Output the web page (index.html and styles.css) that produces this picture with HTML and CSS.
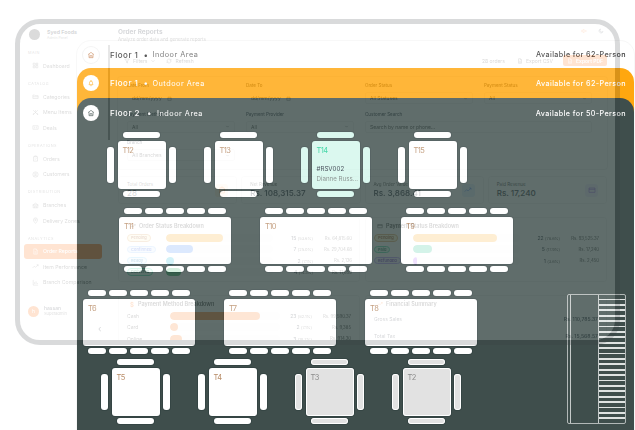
FILE: index.html
```html
<!DOCTYPE html>
<html lang="en">
<head>
<meta charset="utf-8">
<title>Floors</title>
<link rel="stylesheet" href="styles.css">
</head>
<body>
<svg class="sprite" width="0" height="0" aria-hidden="true">
  <symbol id="i-home" viewBox="0 0 24 24"><path d="M3 11 12 4l9 7M6 9.500V20h12V9.500M9 20v-6h6v6"/></symbol>
  <symbol id="i-bell" viewBox="0 0 24 24"><path d="M6 17c1.500-2 1.500-4 1.500-6a4.500 4.500 0 0 1 9 0c0 2 0 4 1.500 6zM10 20h4M12 3v3"/></symbol>
  <symbol id="i-grid" viewBox="0 0 24 24"><path d="M4 4h7v7H4zM14 4h6v5h-6zM14 12h6v8h-6zM4 14h7v6H4z"/></symbol>
  <symbol id="i-folder" viewBox="0 0 24 24"><path d="M3 7h6l2 2h10v10H3zM3 13h18"/></symbol>
  <symbol id="i-cross" viewBox="0 0 24 24"><path d="M4 4l16 16M20 4 4 20M12 4v5M6 14l-2 6M18 14l2 6"/></symbol>
  <symbol id="i-ticket" viewBox="0 0 24 24"><path d="M3 6h18v12H3zM9 9v6M15 9v6"/></symbol>
  <symbol id="i-bag" viewBox="0 0 24 24"><path d="M5 6h14v15H5zM9 6V3h6v3M9 13l2 2 4-4"/></symbol>
  <symbol id="i-user" viewBox="0 0 24 24"><circle cx="12" cy="12" r="9"/><circle cx="12" cy="10" r="3"/><path d="M6 18c2-3 10-3 12 0"/></symbol>
  <symbol id="i-branch" viewBox="0 0 24 24"><path d="M4 10 12 4l8 6v10H4zM9 20v-6h6v6M2 10h20"/></symbol>
  <symbol id="i-pin" viewBox="0 0 24 24"><path d="M12 22s7-7 7-12a7 7 0 0 0-14 0c0 5 7 12 7 12z"/><circle cx="12" cy="10" r="2.500"/></symbol>
  <symbol id="i-file" viewBox="0 0 24 24"><path d="M6 3h8l4 4v14H6zM14 3v4h4M9 13h6M9 17h6"/></symbol>
  <symbol id="i-trend" viewBox="0 0 24 24"><path d="M2 17l6-6 4 4 9-9M16 6h5v5"/></symbol>
  <symbol id="i-chart" viewBox="0 0 24 24"><path d="M4 3v18h17M9 17v-6M14 17V8M19 17v-3"/></symbol>
  <symbol id="i-funnel" viewBox="0 0 24 24"><path d="M3 4h18l-7 8v8l-4-2v-6z"/></symbol>
  <symbol id="i-refresh" viewBox="0 0 24 24"><path d="M4 12a8 8 0 0 1 14-5l2 2M20 4v5h-5M20 12a8 8 0 0 1-14 5l-2-2M4 20v-5h5"/></symbol>
  <symbol id="i-cal" viewBox="0 0 24 24"><path d="M4 6h16v15H4zM4 10h16M8 3v4M16 3v4"/></symbol>
  <symbol id="i-card" viewBox="0 0 24 24"><path d="M3 6h18v13H3zM3 10h18"/></symbol>
  <symbol id="i-sound" viewBox="0 0 24 24"><path d="M3 9h4l5-4v14l-5-4H3zM16 9l5 6M21 9l-5 6"/></symbol>
  <symbol id="i-moon" viewBox="0 0 24 24"><path d="M20 14A8 8 0 1 1 10 4a7 7 0 0 0 10 10z"/></symbol>
  <symbol id="i-chev" viewBox="0 0 24 24"><path d="M6 9l6 6 6-6"/></symbol>
</svg>

<main class="stage">
  <section class="floor floor-plain">
    <header class="floor-head">
      <span class="floor-badge badge-plain"><svg class="ico"><use href="#i-home"/></svg></span>
      <span class="floor-name">Floor 1</span><span class="floor-dot">•</span><span class="floor-area">Indoor Area</span>
      <span class="floor-avail">Available for 62-Person</span>
    </header>
    <section class="floor floor-orange">
      <header class="floor-head">
        <span class="floor-badge badge-orange"><svg class="ico"><use href="#i-bell"/></svg></span>
        <span class="floor-name">Floor 1</span><span class="floor-dot">•</span><span class="floor-area">Outdoor Area</span>
        <span class="floor-avail">Available for 62-Person</span>
      </header>
      <section class="floor floor-dark">
        <header class="floor-head">
          <span class="floor-badge badge-dark"><svg class="ico"><use href="#i-home"/></svg></span>
          <span class="floor-name">Floor 2</span><span class="floor-dot dot-wide">•</span><span class="floor-area">Indoor Area</span>
          <span class="floor-avail">Available for 50-Person</span>
        </header>
        <div class="plan">
          <div class="row row-a">
            <div class="sq"><i class="ch ch-t"></i><i class="ch ch-l"></i><div class="top"><b>T12</b></div><i class="ch ch-r"></i><i class="ch ch-b"></i></div>
            <div class="sq"><i class="ch ch-t"></i><i class="ch ch-l"></i><div class="top"><b>T13</b></div><i class="ch ch-r"></i><i class="ch ch-b"></i></div>
            <div class="sq sq-res"><i class="ch ch-t"></i><i class="ch ch-l"></i><div class="top"><b>T14</b><span class="res-id">#RSV002</span><span class="res-name">Dianne Russ...</span></div><i class="ch ch-r"></i><i class="ch ch-b"></i></div>
            <div class="sq"><i class="ch ch-t"></i><i class="ch ch-l"></i><div class="top"><b>T15</b></div><i class="ch ch-r"></i><i class="ch ch-b"></i></div>
          </div>
          <div class="row row-b">
            <div class="wide"><div class="chs"><i></i><i></i><i></i><i></i><i></i></div><div class="top"><b>T11</b></div><div class="chs"><i></i><i></i><i></i><i></i><i></i></div></div>
            <div class="wide"><div class="chs"><i></i><i></i><i></i><i></i><i></i></div><div class="top"><b>T10</b></div><div class="chs"><i></i><i></i><i></i><i></i><i></i></div></div>
            <div class="wide"><div class="chs"><i></i><i></i><i></i><i></i><i></i></div><div class="top"><b>T9</b></div><div class="chs"><i></i><i></i><i></i><i></i><i></i></div></div>
          </div>
          <div class="row row-c">
            <div class="wide"><div class="chs"><i></i><i></i><i></i><i></i><i></i></div><div class="top"><b>T6</b></div><div class="chs"><i></i><i></i><i></i><i></i><i></i></div></div>
            <div class="wide"><div class="chs"><i></i><i></i><i></i><i></i><i></i></div><div class="top"><b>T7</b></div><div class="chs"><i></i><i></i><i></i><i></i><i></i></div></div>
            <div class="wide"><div class="chs"><i></i><i></i><i></i><i></i><i></i></div><div class="top"><b>T8</b></div><div class="chs"><i></i><i></i><i></i><i></i><i></i></div></div>
          </div>
          <div class="row row-d">
            <div class="sq"><i class="ch ch-t"></i><i class="ch ch-l"></i><div class="top"><b>T5</b></div><i class="ch ch-r"></i><i class="ch ch-b"></i></div>
            <div class="sq"><i class="ch ch-t"></i><i class="ch ch-l"></i><div class="top"><b>T4</b></div><i class="ch ch-r"></i><i class="ch ch-b"></i></div>
            <div class="sq sq-off"><i class="ch ch-t"></i><i class="ch ch-l"></i><div class="top"><b>T3</b></div><i class="ch ch-r"></i><i class="ch ch-b"></i></div>
            <div class="sq sq-off"><i class="ch ch-t"></i><i class="ch ch-l"></i><div class="top"><b>T2</b></div><i class="ch ch-r"></i><i class="ch ch-b"></i></div>
          </div>
          <div class="stairs"><div class="landing"></div><div class="rungs"></div></div>
        </div>
      </section>
    </section>
  </section>

  <div class="device">
    <div class="screen">
      <aside class="side">
        <div class="brand">
          <span class="brand-logo"></span>
          <div><div class="brand-name">Syed Foods</div><div class="brand-sub">Admin Panel</div></div>
        </div>
        <div class="nav-label">MAIN</div>
        <a class="nav"><svg class="ico"><use href="#i-grid"/></svg>Dashboard</a>
        <div class="nav-label">CATALOG</div>
        <a class="nav"><svg class="ico"><use href="#i-folder"/></svg>Categories</a>
        <a class="nav"><svg class="ico"><use href="#i-cross"/></svg>Menu Items</a>
        <a class="nav"><svg class="ico"><use href="#i-ticket"/></svg>Deals</a>
        <div class="nav-label">OPERATIONS</div>
        <a class="nav"><svg class="ico"><use href="#i-bag"/></svg>Orders</a>
        <a class="nav"><svg class="ico"><use href="#i-user"/></svg>Customers</a>
        <div class="nav-label">DISTRIBUTION</div>
        <a class="nav"><svg class="ico"><use href="#i-branch"/></svg>Branches</a>
        <a class="nav"><svg class="ico"><use href="#i-pin"/></svg>Delivery Zones</a>
        <div class="nav-label">ANALYTICS</div>
        <a class="nav nav-on"><svg class="ico"><use href="#i-file"/></svg>Order Reports</a>
        <a class="nav"><svg class="ico"><use href="#i-trend"/></svg>Item Performance</a>
        <a class="nav"><svg class="ico"><use href="#i-chart"/></svg>Branch Comparison</a>
        <div class="who">
          <span class="who-av">h</span>
          <div><div class="who-name">hassan</div><div class="who-role">Superadmin</div></div>
          <span class="who-chev">‹</span>
        </div>
      </aside>
      <div class="main">
        <header class="m-head">
          <div><h1>Order Reports</h1><p>Analyze order data and generate reports</p></div>
          <div class="m-tools"><svg class="ico ico-o"><use href="#i-sound"/></svg><svg class="ico"><use href="#i-moon"/></svg></div>
        </header>
        <div class="bar">
          <span class="bar-item"><svg class="ico"><use href="#i-funnel"/></svg>Filters<svg class="ico"><use href="#i-chev"/></svg></span>
          <span class="bar-item"><svg class="ico"><use href="#i-refresh"/></svg>Refresh</span>
          <span class="bar-count">28 orders</span>
          <span class="bar-item"><svg class="ico"><use href="#i-file"/></svg>Export CSV</span>
          <span class="btn"><svg class="ico"><use href="#i-file"/></svg>Export PDF</span>
        </div>
        <div class="filters">
          <label class="f"><span>Date From</span><div class="inp">dd/mm/yyyy<svg class="ico"><use href="#i-cal"/></svg></div></label>
          <label class="f"><span>Date To</span><div class="inp">dd/mm/yyyy<svg class="ico"><use href="#i-cal"/></svg></div></label>
          <label class="f"><span>Order Status</span><div class="inp inp-full">All Statuses<svg class="ico"><use href="#i-chev"/></svg></div></label>
          <label class="f"><span>Payment Status</span><div class="inp inp-full">All<svg class="ico"><use href="#i-chev"/></svg></div></label>
          <label class="f"><span>Payment Method</span><div class="inp inp-full">All<svg class="ico"><use href="#i-chev"/></svg></div></label>
          <label class="f"><span>Payment Provider</span><div class="inp inp-full">All<svg class="ico"><use href="#i-chev"/></svg></div></label>
          <label class="f f-2"><span>Customer Search</span><div class="inp">Search by name or phone...</div></label>
          <label class="f"><span>Branch</span><div class="inp inp-full">All Branches<svg class="ico"><use href="#i-chev"/></svg></div></label>
        </div>
        <div class="stats">
          <div class="stat"><div><small>Total Orders</small><strong class="st-grey">28</strong></div><span class="st-ic ic-o"><svg class="ico"><use href="#i-bag"/></svg></span></div>
          <div class="stat"><div><small>Net Revenue</small><strong>Rs. 108,315.37</strong></div></div>
          <div class="stat"><div><small>Avg Order Value</small><strong>Rs. 3,868.41</strong></div><span class="st-ic ic-b"><svg class="ico"><use href="#i-trend"/></svg></span></div>
          <div class="stat"><div><small>Paid Revenue</small><strong>Rs. 17,240</strong></div><span class="st-ic ic-p"><svg class="ico"><use href="#i-card"/></svg></span></div>
        </div>
        <div class="cards">
          <div class="card">
            <h2><svg class="ico"><use href="#i-trend"/></svg>Order Status Breakdown</h2>
            <div class="line line-a"><span class="pill p-amber">Pending</span><div class="track"><div class="fill f-amber" style="width:53.6%"></div></div><span class="n">15 <em>(53.6%)</em></span><span class="amt">Rs. 64,815.60</span></div>
            <div class="line line-a"><span class="pill p-blue">Confirmed</span><div class="track"><div class="fill f-blue" style="width:25%"></div></div><span class="n">7 <em>(25.0%)</em></span><span class="amt">Rs. 29,704.68</span></div>
            <div class="line line-a"><span class="pill p-sky">Ready</span><div class="track"><div class="fill f-cyan" style="width:7.1%"></div></div><span class="n">2 <em>(7.1%)</em></span><span class="amt">Rs. 2,136</span></div>
            <div class="line line-a"><span class="pill p-green">Delivered</span><div class="track"><div class="fill f-green" style="width:14.3%"></div></div><span class="n">4 <em>(14.3%)</em></span><span class="amt">Rs. 11,659</span></div>
          </div>
          <div class="card">
            <h2><svg class="ico"><use href="#i-card"/></svg>Payment Status Breakdown</h2>
            <div class="line line-a"><span class="pill p-amber">Pending</span><div class="track"><div class="fill f-amber" style="width:78.6%"></div></div><span class="n">22 <em>(78.6%)</em></span><span class="amt">Rs. 93,525.37</span></div>
            <div class="line line-a"><span class="pill p-green">Paid</span><div class="track"><div class="fill f-mint" style="width:17.9%"></div></div><span class="n">5 <em>(17.9%)</em></span><span class="amt">Rs. 17,240</span></div>
            <div class="line line-a"><span class="pill p-violet">Refunded</span><div class="track"><div class="fill f-violet" style="width:3.6%"></div></div><span class="n">1 <em>(3.6%)</em></span><span class="amt">Rs. 2,450</span></div>
          </div>
          <div class="card">
            <h2><span class="usd">$</span>Payment Method Breakdown</h2>
            <div class="line line-b"><span class="lbl">Cash</span><div class="track"><div class="fill f-org" style="width:82.1%"></div></div><span class="n">23 <em>(82.1%)</em></span><span class="amt">Rs. 99,590.37</span></div>
            <div class="line line-b"><span class="lbl">Card</span><div class="track"><div class="fill f-org" style="width:7.1%"></div></div><span class="n">2 <em>(7.1%)</em></span><span class="amt">Rs. 9,385</span></div>
            <div class="line line-b"><span class="lbl">Online</span><div class="track"><div class="fill f-org" style="width:10.7%"></div></div><span class="n">3 <em>(10.7%)</em></span><span class="amt">Rs. 914.30</span></div>
          </div>
          <div class="card">
            <h2><svg class="ico ico-o"><use href="#i-trend"/></svg>Financial Summary</h2>
            <div class="sum"><span>Gross Sales</span><b>Rs. 110,785.37</b></div>
            <div class="sum"><span>Total Tax</span><b>Rs. 15,568.57</b></div>
          </div>
        </div>
      </div>
    </div>
  </div>
</main>
</body>
</html>
```
FILE: styles.css
```css
* { box-sizing: border-box; }
html, body { margin: 0; padding: 0; background: #fff; }
body { font-family: Inter, "Liberation Sans", sans-serif; color: #1f2937; }
.sprite { position: absolute; }
.ico { width: 8px; height: 8px; fill: none; stroke: currentColor; stroke-width: 2; flex: none; }

.stage { position: relative; width: 635px; height: 430px; overflow: hidden; padding: 41px 1px 0 77px; filter: blur(.4px); }

/* stacked floors */
.floor { border-radius: 14px 14px 0 0; }
.floor-plain { background: #fff; box-shadow: 0 0 0 1px #f7f7f7; height: 600px; }
.floor-orange { background: #ffa70f; height: 560px; }
.floor-dark { background: #3f4e4c; height: 530px; position: relative; }
.floor-head { display: flex; align-items: center; height: 30px; padding: 0 8px 0 6px; letter-spacing: .5px; color: #fff; }
.floor-plain > .floor-head { height: 27px; color: #333; }
.floor-badge { width: 16px; height: 16px; border-radius: 50%; background: #fff; display: flex; align-items: center; justify-content: center; margin-right: 11px; }
.floor-badge .ico { width: 8px; height: 8px; }
.badge-plain { color: #c98a5b; box-shadow: 0 0 0 1px #f2f2f2; }
.badge-orange { color: #ffa70f; }
.badge-dark { color: #3f4e4c; }
.floor-name { font-size: 8px; font-weight: 500; }
.floor-dot { margin: 0 5px; width: 4px; font-size: 8px; }
.dot-wide { margin: 0 6px 0 7px; }
.floor-area { font-size: 7.300px; }
.floor-plain > .floor-head .floor-area { color: #666; }
.floor-avail { margin-left: auto; font-size: 7.200px; font-weight: 500; letter-spacing: .4px; }

/* floor plan */
.plan { padding-top: 4px; }
.row { display: flex; }
.row-a { margin-left: 30px; gap: 28px; }
.row-b { margin: 11px 0 0 42px; gap: 29px; }
.row-c { margin: 18px 0 0 6px; gap: 29px; }
.row-d { margin: 5px 0 0 24px; gap: 28px; }

.ch, .chs i { display: block; background: #fff; border-radius: 3px; box-shadow: 0 0 0 1px rgba(20,40,40,.22); }
.sq { display: grid; grid-template-columns: 7px 48px 7px; grid-template-rows: 6px 48px 6px; column-gap: 3.500px; row-gap: 2.500px; width: 69px; }
.ch-t, .ch-b { width: 37px; justify-self: center; }
.ch-t { grid-area: 1 / 2; }
.ch-b { grid-area: 3 / 2; }
.ch-l { grid-area: 2 / 1; height: 36px; align-self: center; }
.ch-r { grid-area: 2 / 3; height: 36px; align-self: center; }
.top { background: #fff; border-radius: 3px; padding: 5px; box-shadow: 0 0 0 1px rgba(20,40,40,.22); display: flex; flex-direction: column; }
.sq .top { grid-area: 2 / 2; }
.top b { font-weight: 400; font-size: 7.500px; line-height: 9px; color: #b98d68; letter-spacing: -.6px; }
.sq-res .top, .sq-res .ch { background: #d4f7ec; }
.sq-res .top b { color: #22cf97; }
.res-id { margin-top: 10px; font-size: 6.200px; color: #1f2937; }
.res-name { margin-top: 3px; font-size: 6.200px; color: #75807d; white-space: nowrap; }
.sq-off .top, .sq-off .ch { background: #e2e2e2; outline: 1px solid #fff; outline-offset: -1px; }
.sq-off .top b { color: #8d8d8d; }

.wide { width: 112px; }
.wide .top { height: 47px; margin: 2.500px 0; }
.chs { display: flex; justify-content: center; gap: 3px; height: 6px; }
.chs i { width: 18px; height: 6px; }

.stairs { position: absolute; left: 490px; top: 196px; width: 59px; height: 130px; display: flex; border: 1px solid rgba(255,255,255,.6); border-radius: 2px; }
.landing { width: 29px; margin-left: 2px; border-left: 1px solid rgba(255,255,255,.7); border-right: 1px solid rgba(255,255,255,.7); }
.rungs { flex: 1; background: repeating-linear-gradient(to bottom, transparent 0 3.600px, #dfe3e2 3.600px 5.400px); }

/* device frame with the report page, lying over the floors */
.device { position: absolute; left: 15px; top: 19px; width: 605px; height: 326px; border: 5px solid rgba(55,60,65,.19); border-radius: 25px; }
.screen { width: 100%; height: 100%; border-radius: 20px; overflow: hidden; background: #fcfcfc; opacity: .18; display: flex; color: #111827; }

.side { width: 88px; flex: none; background: #fff; display: flex; flex-direction: column; position: relative; }
.brand { height: 26px; display: flex; align-items: center; gap: 7px; padding: 0 0 5px 9px; }
.brand-logo { width: 11px; height: 11px; border-radius: 50%; background: #333; flex: none; }
.brand-name { font-size: 5.300px; font-weight: 700; line-height: 7px; }
.brand-sub { font-size: 3.500px; line-height: 4px; color: #555; }
.nav-label { height: 6px; font-size: 3.800px; line-height: 6px; letter-spacing: .5px; color: #555; padding-left: 8px; margin-bottom: 2.300px; }
.nav { height: 15.400px; display: flex; align-items: center; gap: 4px; font-size: 5.200px; color: #333; padding-left: 8px; margin: 0 6px 0 4px; }
.nav .ico { width: 7px; height: 7px; stroke-width: 1.600; }
.nav + .nav-label { margin-top: 7.300px; }
.nav-on { background: #ff6600; color: #fff; border-radius: 3px; font-weight: 500; }
.who { margin-top: auto; margin-bottom: 23px; display: flex; align-items: center; gap: 5px; padding-left: 8px; position: relative; }
.who-av { width: 11px; height: 11px; border-radius: 50%; background: #ff6600; color: #fff; font-size: 5px; display: flex; align-items: center; justify-content: center; }
.who-name { font-size: 5px; font-weight: 500; line-height: 6px; }
.who-role { font-size: 4px; line-height: 6px; color: #444; }
.who-chev { position: absolute; left: 78px; top: 19px; font-size: 9px; line-height: 9px; }

.main { flex: 1; min-width: 0; padding: 0 8px 0 10px; position: relative; }
.main::before { content: ""; position: absolute; left: 0; top: 21px; width: 2px; height: 95px; background: #777; }
.m-head { height: 21px; padding-top: 4px; display: flex; justify-content: space-between; }
.m-head h1 { margin: 0; font-size: 6.500px; line-height: 8px; font-weight: 700; }
.m-head p { margin: 1px 0 0; font-size: 4.600px; line-height: 6px; color: #333; }
.m-tools { display: flex; gap: 11px; padding-right: 3px; }
.m-tools .ico { width: 6px; height: 6px; }
.ico-o { color: #ff6600; }

.bar { margin-top: 9px; height: 13px; display: flex; align-items: center; padding-left: 6px; font-size: 5px; color: #222; }
.bar-item { display: flex; align-items: center; gap: 3px; margin-right: 10px; }
.bar-item .ico { width: 6px; height: 6px; }
.bar-count { margin-left: auto; margin-right: 12px; }
.btn { width: 44px; height: 11px; background: #ff6600; color: #fff; border-radius: 2px; display: flex; align-items: center; justify-content: center; gap: 3px; font-weight: 600; }
.btn .ico { width: 6px; height: 6px; }

.filters { margin-top: 10px; height: 92px; padding: 6px 9px 0; border-radius: 3px; background: #fff; box-shadow: 0 0 0 1px #eee; display: grid; grid-template-columns: repeat(4, 108px); column-gap: 11px; grid-auto-rows: 28.500px; }
.f { display: block; font-size: 4.500px; font-weight: 500; }
.f span { display: block; height: 6px; line-height: 6px; }
.f-2 { grid-column: span 2; }
.inp { margin-top: 3px; height: 12px; display: flex; align-items: center; justify-content: space-between; padding: 0 4px; font-size: 5px; font-weight: 400; color: #222; border: 1px solid #eee; border-radius: 2px; }
.inp .ico { width: 5px; height: 5px; }
.f:nth-child(-n+2) .inp { width: 50px; border-color: transparent; }

.stats { margin-top: 7px; height: 28px; display: grid; grid-template-columns: repeat(4, 1fr); gap: 4px; }
.stat { background: #fff; border: 1px solid #eee; border-radius: 3px; padding: 4px 8px; display: flex; align-items: center; justify-content: space-between; }
.stat small { display: block; font-size: 4.500px; line-height: 6px; color: #222; }
.stat strong { display: block; font-size: 8px; line-height: 11px; font-weight: 600; white-space: nowrap; }
.st-grey { font-weight: 400 !important; }
.st-ic { width: 13px; height: 13px; border-radius: 3px; display: flex; align-items: center; justify-content: center; }
.st-ic .ico { width: 8px; height: 8px; stroke-width: 1.600; }
.ic-o { background: #ffedd5; color: #ff6600; }
.ic-b { background: #dbeafe; color: #2563eb; }
.ic-p { background: #ede9fe; color: #6d28d9; }

.cards { margin-top: 12.500px; display: grid; grid-template-columns: 242px 242px; column-gap: 5px; grid-template-rows: 65px 60px; row-gap: 13px; }
.card { background: #fff; border: 1px solid #eee; border-radius: 3px; padding: 5px 8px 0; }
.card h2 { margin: 0 0 3px; height: 7px; display: flex; align-items: center; gap: 3px; font-size: 5.500px; line-height: 7px; font-weight: 600; color: #222; padding-left: 3px; }
.card h2 .ico { width: 6px; height: 6px; }
.usd { color: #ff6600; font-size: 6px; width: 5px; }
.line { display: grid; align-items: center; height: 11.300px; grid-template-columns: 39px 107px 40px 39px; font-size: 4.600px; }
.line-b { grid-template-columns: 43px 110px 32px 39px; font-size: 5px; }
.track { height: 8px; background: #f8f8f8; border-radius: 4px; overflow: hidden; }
.fill { height: 100%; border-radius: 4px; }
.f-amber { background: #f59e0b; }
.f-blue { background: #3b82f6; }
.f-cyan { background: #06b6d4; }
.f-green { background: #16a34a; }
.f-mint { background: #10b981; }
.f-violet { background: #a855f7; }
.f-org { background: #f97316; }
.pill { justify-self: start; height: 7.500px; line-height: 6px; padding: 0 3px; border-radius: 4px; border: 1px solid; font-size: 4px; font-weight: 600; }
.p-amber { color: #92400e; background: #fef3c7; border-color: #d9a05a; }
.p-blue { color: #1d4ed8; background: #dbeafe; border-color: #93c5fd; }
.p-sky { color: #0369a1; background: #e0f2fe; border-color: #7dd3fc; }
.p-green { color: #065f46; background: #d1fae5; border-color: #34d399; }
.p-violet { color: #5b21b6; background: #ede9fe; border-color: #a78bfa; }
.n { text-align: right; white-space: nowrap; font-size: 5px; font-weight: 500; }
.n em { font-style: normal; font-size: 4px; color: #222; font-weight: 400; }
.amt { text-align: right; white-space: nowrap; font-size: 4.300px; color: #111; }
.lbl { font-size: 5px; color: #222; }
.sum { display: flex; justify-content: space-between; align-items: center; height: 17px; font-size: 5px; }
.sum b { font-weight: 600; }
```
